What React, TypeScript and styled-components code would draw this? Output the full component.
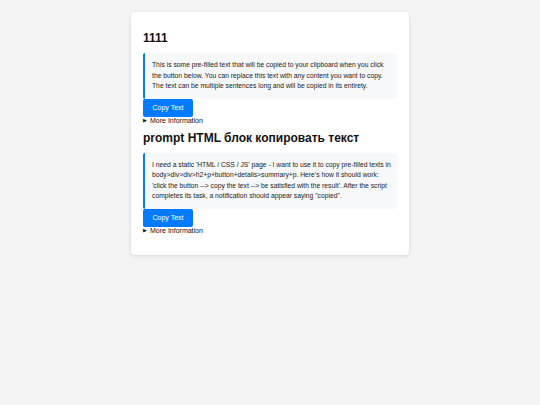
import React from "react";
import styled, { createGlobalStyle } from "styled-components";

const GlobalStyle = createGlobalStyle`
  html, body {
    margin: 0;
    padding: 0;
    background: #f4f4f4;
    font-family: "Liberation Sans", Arial, sans-serif;
    color: #111;
  }
`;

const Page = styled.div`
  padding-top: 12px;
  min-height: 393px;
`;

const Card = styled.div`
  width: 278px;
  box-sizing: border-box;
  margin: 0 auto;
  padding: 12px 12px 21px;
  background: #fff;
  border-radius: 4px;
  box-shadow: 0 1px 4px rgba(0, 0, 0, 0.12);
`;

const Section = styled.div``;

const Title = styled.h2`
  margin: 7px 0 8px;
  font-size: 12px;
  line-height: 14px;
  font-weight: bold;
  color: #111;
`;

const Quote = styled.p`
  margin: 0;
  padding: 7px 4px 7px 7px;
  background: #f7f8fa;
  border-left: 2px solid #007bff;
  border-radius: 2px;
  font-size: 6.75px;
  line-height: 10.5px;
  color: #222;
`;

const CopyButton = styled.button`
  display: block;
  height: 18px;
  width: 50px;
  padding: 0;
  border: none;
  border-radius: 2px;
  background: #007bff;
  color: #fff;
  font-family: inherit;
  font-size: 7px;
  cursor: pointer;
`;

const Details = styled.details`
  font-size: 7px;
  line-height: 7px;

  summary {
    cursor: pointer;
    list-style: none;
  }
  summary::-webkit-details-marker {
    display: none;
  }
  summary::before {
    content: "▶";
    font-size: 5px;
    margin-right: 3px;
    vertical-align: 1px;
  }
`;

const items = [
  {
    title: "1111",
    text:
      "This is some pre-filled text that will be copied to your clipboard when you click the button below. You can replace this text with any content you want to copy. The text can be multiple sentences long and will be copied in its entirety.",
  },
  {
    title: "prompt HTML блок копировать текст",
    text:
      "I need a static 'HTML / CSS / JS' page - I want to use it to copy pre-filled texts in body>div>div>h2+p+button+details>summary+p. Here's how it should work: 'click the button --> copy the text --> be satisfied with the result'. After the script completes its task, a notification should appear saying \"copied\".",
  },
];

export default function App() {
  return (
    <>
      <GlobalStyle />
      <Page>
        <Card>
          {items.map((item) => (
            <Section key={item.title}>
              <Title>{item.title}</Title>
              <Quote>{item.text}</Quote>
              <CopyButton onClick={() => navigator.clipboard?.writeText(item.text)}>
                Copy Text
              </CopyButton>
              <Details>
                <summary>More Information</summary>
              </Details>
            </Section>
          ))}
        </Card>
      </Page>
    </>
  );
}
